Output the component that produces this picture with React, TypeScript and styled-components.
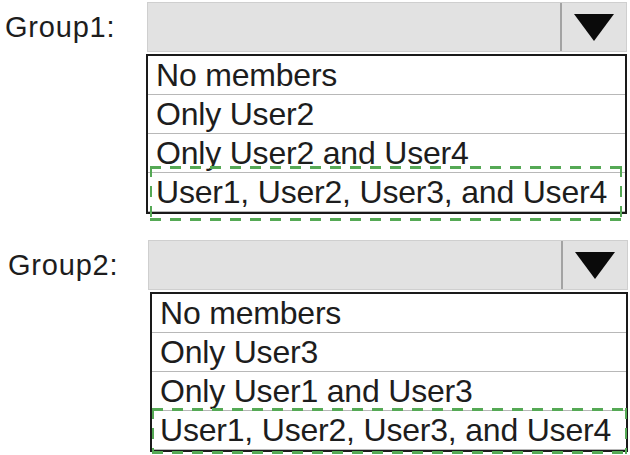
import React from 'react';
import styled, { createGlobalStyle } from 'styled-components';

const GlobalStyle = createGlobalStyle`
  body {
    margin: 0;
    background: #ffffff;
    font-family: "Liberation Sans", Arial, sans-serif;
    color: #1d1d1d;
  }
`;

const Page = styled.div`
  width: 630px;
  height: 455px;
  padding-top: 2px;
  box-sizing: border-box;
  display: flex;
  flex-direction: column;
  gap: 26px;
  overflow: hidden;
`;

const Group = styled.div`
  display: flex;
  align-items: flex-start;
`;

const Label = styled.div<{ $pad: number; $w: number }>`
  width: ${(p) => p.$w}px;
  padding-left: ${(p) => p.$pad}px;
  box-sizing: border-box;
  height: 50px;
  display: flex;
  align-items: center;
  font-size: 29px;
  letter-spacing: 0.8px;
`;

const Dropdown = styled.div`
  width: 480px;
  display: flex;
  flex-direction: column;
`;

const Select = styled.div`
  height: 50px;
  display: flex;
  background: #e2e2e2;
  border: 1px solid #cfcfcf;
  box-sizing: border-box;
`;

const Field = styled.div`
  flex: 1;
`;

const Toggle = styled.div`
  width: 64px;
  border-left: 2px solid #a3a3a3;
  display: flex;
  align-items: center;
  justify-content: center;
`;

const Arrow = styled.div`
  width: 0;
  height: 0;
  border-left: 20px solid transparent;
  border-right: 20px solid transparent;
  border-top: 27px solid #0a0a0a;
`;

const List = styled.div<{ $shift: number }>`
  position: relative;
  margin-top: 2px;
  margin-left: ${(p) => p.$shift}px;
  border: 2px solid #1a1a1a;
  background: #ffffff;
`;

const Option = styled.div`
  height: 39px;
  line-height: 38px;
  padding-left: 8px;
  font-size: 32px;
  letter-spacing: -0.2px;
  border-bottom: 1px solid #b8b8b8;
  box-sizing: border-box;
  white-space: nowrap;
  &:last-of-type {
    border-bottom: none;
  }
`;

const dashH = 'repeating-linear-gradient(90deg, #55a955 0 11px, transparent 11px 20px)';
const dashV = 'repeating-linear-gradient(180deg, #55a955 0 11px, transparent 11px 20px)';

const Answer = styled.div<{ $top: number; $left: number; $w: number; $h: number }>`
  position: absolute;
  top: ${(p) => p.$top}px;
  left: ${(p) => p.$left}px;
  width: ${(p) => p.$w}px;
  height: ${(p) => p.$h}px;
  background:
    ${dashH} left top / 100% 3px no-repeat,
    ${dashH} left bottom / 100% 3px no-repeat,
    ${dashV} left top / 2px 100% no-repeat,
    ${dashV} right top / 2px 100% no-repeat;
  pointer-events: none;
`;

type GroupData = {
  name: string;
  pad: number;
  labelWidth: number;
  shift: number;
  options: string[];
  answer: { top: number; left: number; w: number; h: number };
};

const groups: GroupData[] = [
  {
    name: 'Group1:',
    pad: 5,
    labelWidth: 147,
    shift: -1,
    options: ['No members', 'Only User2', 'Only User2 and User4', 'User1, User2, User3, and User4'],
    answer: { top: 110, left: 2, w: 472, h: 55 },
  },
  {
    name: 'Group2:',
    pad: 8,
    labelWidth: 148,
    shift: 2,
    options: ['No members', 'Only User3', 'Only User1 and User3', 'User1, User2, User3, and User4'],
    answer: { top: 114, left: 0, w: 475, h: 46 },
  },
];

const App = () => {
  return (
    <>
      <GlobalStyle />
      <Page>
        {groups.map((g) => (
          <Group key={g.name}>
            <Label $pad={g.pad} $w={g.labelWidth}>
              {g.name}
            </Label>
            <Dropdown>
              <Select>
                <Field />
                <Toggle>
                  <Arrow />
                </Toggle>
              </Select>
              <List $shift={g.shift}>
                {g.options.map((o) => (
                  <Option key={o}>{o}</Option>
                ))}
                <Answer $top={g.answer.top} $left={g.answer.left} $w={g.answer.w} $h={g.answer.h} />
              </List>
            </Dropdown>
          </Group>
        ))}
      </Page>
    </>
  );
};

export default App;
